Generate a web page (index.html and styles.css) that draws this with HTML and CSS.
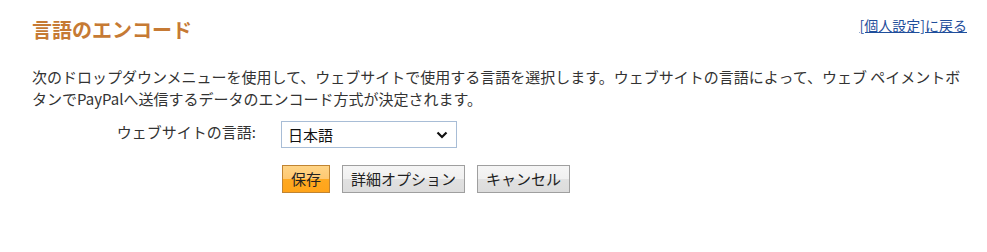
FILE: index.html
```html
<!DOCTYPE html>
<html lang="ja">
<head>
<meta charset="utf-8">
<title>言語のエンコード</title>
<link rel="stylesheet" href="styles.css">
</head>
<body>
<div class="page">
  <div class="header">
    <h1 class="title">言語のエンコード</h1>
    <a class="back" href="#">[個人設定]に戻る</a>
  </div>
  <p class="desc">次のドロップダウンメニューを使用して、ウェブサイトで使用する言語を選択します。ウェブサイトの言語によって、ウェブ ペイメントボタンでPayPalへ送信するデータのエンコード方式が決定されます。</p>
  <div class="form-row">
    <label class="label" for="lang">ウェブサイトの言語:</label>
    <div class="select">
      <span class="select-value">日本語</span>
      <svg class="chev" width="12" height="8" viewBox="0 0 12 8"><path d="M1.5 1.5 L6 6 L10.5 1.5" fill="none" stroke="#111" stroke-width="2.2"/></svg>
    </div>
  </div>
  <div class="actions">
    <button class="btn primary">保存</button>
    <button class="btn">詳細オプション</button>
    <button class="btn">キャンセル</button>
  </div>
</div>
</body>
</html>
```

FILE: styles.css
```css
html, body {
  margin: 0;
  padding: 0;
  background: #fff;
}
body {
  font-family: "Noto Sans CJK JP", "Noto Sans", sans-serif;
  color: #333;
}
.page {
  padding: 15px 20px 0 32px;
}
.header {
  display: flex;
  justify-content: space-between;
  align-items: flex-start;
}
.title {
  margin: 0;
  font-size: 20px;
  line-height: 30px;
  font-weight: bold;
  color: #c67a34;
}
.back {
  margin-top: 0;
  font-size: 14px;
  line-height: 20px;
  color: #1f4e9b;
  text-decoration: underline;
}
.desc {
  margin: 21px 0 0 0;
  font-size: 15px;
  line-height: 22px;
  color: #333;
}
.form-row {
  display: flex;
  align-items: center;
  margin-top: 11px;
}
.label {
  width: 249px;
  text-align: right;
  padding-right: 25px;
  box-sizing: border-box;
  font-size: 15px;
  color: #333;
  margin-bottom: 6px;
}
.select {
  width: 176px;
  height: 27px;
  box-sizing: border-box;
  border: 1px solid #a8bdd6;
  display: flex;
  align-items: center;
  justify-content: space-between;
  padding: 0 8px 0 6px;
  font-size: 15px;
  color: #111;
}
.chev {
  display: block;
}
.actions {
  display: flex;
  gap: 12px;
  margin-top: 17px;
  padding-left: 250px;
}
.btn {
  height: 28px;
  box-sizing: border-box;
  padding: 0 8px;
  font-family: "Noto Sans CJK JP", "Noto Sans", sans-serif;
  font-size: 15px;
  color: #222;
  border: 1px solid #9f9f9f;
  background: linear-gradient(#f5f5f5 0%, #f0f0f0 50%, #e1e1e1 50%, #dcdcdc 100%);
  border-radius: 0;
  line-height: 24px;
}
.btn.primary {
  border-color: #c08432;
  background: linear-gradient(#ffd485 0%, #fec872 50%, #ffa920 50%, #ffa41a 100%);
  color: #222;
}
```
